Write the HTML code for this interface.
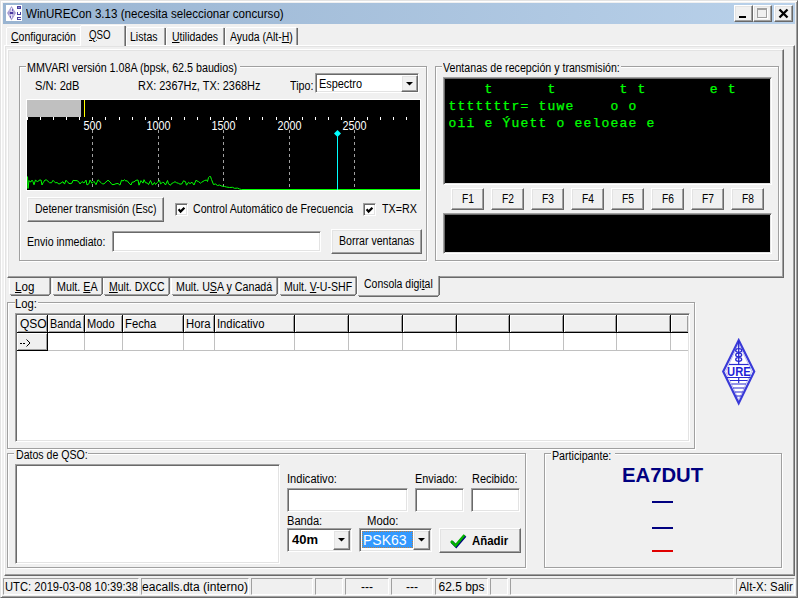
<!DOCTYPE html><html><head><meta charset="utf-8"><style>
*{box-sizing:border-box;margin:0;padding:0}
html,body{width:798px;height:598px;overflow:hidden;background:#f0f0f0}
body{position:relative;font-family:"Liberation Sans",sans-serif;font-size:12px;color:#000}
div,span,svg{position:absolute}
.t{white-space:nowrap;line-height:14px;font-size:12px;transform:scaleX(0.87);transform-origin:0 0}
.u{text-decoration:underline;position:static}
.raised{border:1px solid;border-color:#fff #696969 #696969 #fff;box-shadow:inset -1px -1px #a0a0a0,inset 1px 1px #e3e3e3;background:#f0f0f0}
.sunken{border:1px solid;border-color:#a0a0a0 #fff #fff #a0a0a0;box-shadow:inset 1px 1px #696969,inset -1px -1px #e3e3e3;background:#fff}
.gb{border:1px solid #a0a0a0;box-shadow:inset 1px 1px #fff,1px 1px #fff}
.bg{background:#f0f0f0}
.hl{position:absolute;height:1px}
.vl{position:absolute;width:1px}
</style></head><body>
<div style="left:0;top:0;width:798px;height:598px;border:1px solid;border-color:#e3e3e3 #696969 #696969 #e3e3e3;box-shadow:inset 1px 1px #fff,inset -1px -1px #a0a0a0"></div>
<div style="left:3px;top:3px;width:792px;height:21px;background:linear-gradient(to right,#99b4d1,#b9d1ea)"></div>
<div style="left:6px;top:5px;width:16px;height:16px;background:#fff">
<svg width="16" height="16" style="left:0;top:0">
<polygon points="5.5,1 10,8 5.5,15.5 1,8" fill="#a89ed2"/>
<path d="M5.5 3 V13" stroke="#ece8f8" stroke-width="1"/>
<path d="M3.5 6 H7.5 M3 10 H8" stroke="#d8d0f0" stroke-width="1"/>
<rect x="4" y="7" width="3" height="2" fill="#4a3aa0"/>
<rect x="6" y="4" width="1" height="2" fill="#6a5ab8"/>
<rect x="4" y="11" width="1" height="2" fill="#6a5ab8"/>
<rect x="11" y="1" width="4" height="3" fill="#4a40a0"/><rect x="12" y="2" width="2" height="1" fill="#9890d0"/>
<rect x="11" y="7" width="1" height="3" fill="#4a40a0"/><rect x="14" y="7" width="1" height="3" fill="#4a40a0"/><rect x="11" y="9" width="4" height="1" fill="#4a40a0"/>
<rect x="11" y="12" width="4" height="1" fill="#4a40a0"/><rect x="11" y="12" width="1" height="3" fill="#4a40a0"/><rect x="11" y="14" width="4" height="1" fill="#4a40a0"/>
</svg></div>
<span style="left:26px;top:6px;font-size:12px;line-height:16px;white-space:nowrap;transform:scaleX(0.966);transform-origin:0 0;color:#000">WinURECon 3.13 (necesita seleccionar concurso)</span>
<div class="raised" style="left:734px;top:5px;width:19px;height:17px"><div style="left:4px;top:10px;width:7px;height:2px;background:#000"></div></div>
<div class="raised" style="left:753px;top:5px;width:19px;height:17px"><div style="left:3px;top:2px;width:10px;height:10px;border:1px solid #a0a0a0;border-top-width:2px;box-shadow:1px 1px #fff"></div></div>
<div class="raised" style="left:774px;top:5px;width:19px;height:17px"><svg width="17" height="15" style="left:0;top:0"><path d="M4.5 3.5 L12.5 11.5 M12.5 3.5 L4.5 11.5" stroke="#000" stroke-width="2.3"/></svg></div>
<div class="raised" style="left:4px;top:45px;width:791px;height:531px"></div>
<div style="left:6px;top:27px;width:76px;height:18px;"><div class="hl" style="left:1px;top:0;width:73px;background:#fff"></div><div class="vl" style="left:0;top:1px;height:17px;background:#fff"></div><div class="vl" style="left:75px;top:1px;height:17px;background:#696969"></div><div class="vl" style="left:74px;top:1px;height:17px;background:#a0a0a0"></div></div>
<div style="left:126px;top:27px;width:40px;height:18px;"><div class="hl" style="left:1px;top:0;width:37px;background:#fff"></div><div class="vl" style="left:0;top:1px;height:17px;background:#fff"></div><div class="vl" style="left:39px;top:1px;height:17px;background:#696969"></div><div class="vl" style="left:38px;top:1px;height:17px;background:#a0a0a0"></div></div>
<div style="left:166px;top:27px;width:59px;height:18px;"><div class="hl" style="left:1px;top:0;width:56px;background:#fff"></div><div class="vl" style="left:0;top:1px;height:17px;background:#fff"></div><div class="vl" style="left:58px;top:1px;height:17px;background:#696969"></div><div class="vl" style="left:57px;top:1px;height:17px;background:#a0a0a0"></div></div>
<div style="left:225px;top:27px;width:73px;height:18px;"><div class="hl" style="left:1px;top:0;width:70px;background:#fff"></div><div class="vl" style="left:0;top:1px;height:17px;background:#fff"></div><div class="vl" style="left:72px;top:1px;height:17px;background:#696969"></div><div class="vl" style="left:71px;top:1px;height:17px;background:#a0a0a0"></div></div>
<div style="left:80px;top:25px;width:46px;height:21px;background:#f0f0f0;"><div class="hl" style="left:1px;top:0;width:43px;background:#fff"></div><div class="vl" style="left:0;top:1px;height:20px;background:#fff"></div><div class="vl" style="left:45px;top:1px;height:20px;background:#696969"></div><div class="vl" style="left:44px;top:1px;height:20px;background:#a0a0a0"></div></div>
<span class="t " style="left:11.12px;top:30px;transform:scaleX(0.8767);"><span class=u>C</span>onfiguración</span>
<span class="t " style="left:89.00px;top:28px;transform:scaleX(0.8077);"><span class=u>Q</span>SO</span>
<span class="t " style="left:130.12px;top:30px;transform:scaleX(0.8800);">Listas</span>
<span class="t " style="left:172.13px;top:30px;transform:scaleX(0.8745);"><span class=u>U</span>tilidades</span>
<span class="t " style="left:230.00px;top:30px;transform:scaleX(0.8746);">Ayuda (Alt-<span class=u>H</span>)</span>
<div class="raised" style="left:7px;top:49px;width:777px;height:229px"></div>
<div class="gb" style="left:19px;top:66px;width:408px;height:195px"></div>
<div style="left:26px;top:65px;width:214px;height:4px;background:#f0f0f0"></div>
<span class="t " style="left:27.11px;top:61px;transform:scaleX(0.8932);">MMVARI versión 1.08A (bpsk, 62.5 baudios)</span>
<span class="t " style="left:34.68px;top:79px;transform:scaleX(0.9234);">S/N: 2dB</span>
<span class="t " style="left:138.09px;top:79px;transform:scaleX(0.9098);">RX: 2367Hz, TX: 2368Hz</span>
<span class="t " style="left:289.70px;top:79px;transform:scaleX(0.8920);">Tipo:</span>
<div class="sunken" style="left:315px;top:73px;width:104px;height:20px"></div>
<span class="t " style="left:318.59px;top:77px;transform:scaleX(0.9087);">Espectro</span>
<div class="raised" style="left:401px;top:75px;width:17px;height:17px"><svg width="15" height="15" style="left:0;top:0"><polygon points="4,6 11,6 7.5,9.5" fill="#000"/></svg></div>
<div style="left:27px;top:100px;width:393px;height:90px;outline:1px solid #fff"><svg width="393" height="90" style="left:0;top:0"><rect x="0" y="0" width="393" height="90" fill="#000"/><rect x="0" y="0" width="54" height="17" fill="#c0c0c0"/><rect x="57" y="0" width="1" height="17" fill="#ffff00"/><rect x="0" y="17" width="1" height="3" fill="#fff"/><rect x="13" y="17" width="1" height="3" fill="#fff"/><rect x="26" y="17" width="1" height="3" fill="#fff"/><rect x="39" y="17" width="1" height="3" fill="#fff"/><rect x="52" y="17" width="1" height="3" fill="#fff"/><rect x="65" y="17" width="1" height="3" fill="#fff"/><rect x="78" y="17" width="1" height="3" fill="#fff"/><rect x="92" y="17" width="1" height="3" fill="#fff"/><rect x="105" y="17" width="1" height="3" fill="#fff"/><rect x="118" y="17" width="1" height="3" fill="#fff"/><rect x="131" y="17" width="1" height="3" fill="#fff"/><rect x="144" y="17" width="1" height="3" fill="#fff"/><rect x="157" y="17" width="1" height="3" fill="#fff"/><rect x="170" y="17" width="1" height="3" fill="#fff"/><rect x="183" y="17" width="1" height="3" fill="#fff"/><rect x="196" y="17" width="1" height="3" fill="#fff"/><rect x="209" y="17" width="1" height="3" fill="#fff"/><rect x="222" y="17" width="1" height="3" fill="#fff"/><rect x="235" y="17" width="1" height="3" fill="#fff"/><rect x="249" y="17" width="1" height="3" fill="#fff"/><rect x="262" y="17" width="1" height="3" fill="#fff"/><rect x="275" y="17" width="1" height="3" fill="#fff"/><rect x="288" y="17" width="1" height="3" fill="#fff"/><rect x="301" y="17" width="1" height="3" fill="#fff"/><rect x="314" y="17" width="1" height="3" fill="#fff"/><rect x="327" y="17" width="1" height="3" fill="#fff"/><rect x="340" y="17" width="1" height="3" fill="#fff"/><rect x="353" y="17" width="1" height="3" fill="#fff"/><rect x="366" y="17" width="1" height="3" fill="#fff"/><rect x="379" y="17" width="1" height="3" fill="#fff"/><line x1="65.5" y1="30" x2="65.5" y2="90" stroke="#a0a0a0" stroke-width="1" stroke-dasharray="3,3"/><text x="65.5" y="30" fill="#fff" font-family="Liberation Sans" font-size="12" text-anchor="middle" transform="translate(65.5,0) scale(0.9,1) translate(-65.5,0)">500</text><line x1="131.5" y1="30" x2="131.5" y2="90" stroke="#a0a0a0" stroke-width="1" stroke-dasharray="3,3"/><text x="131.5" y="30" fill="#fff" font-family="Liberation Sans" font-size="12" text-anchor="middle" transform="translate(131.5,0) scale(0.9,1) translate(-131.5,0)">1000</text><line x1="196.5" y1="30" x2="196.5" y2="90" stroke="#a0a0a0" stroke-width="1" stroke-dasharray="3,3"/><text x="196.5" y="30" fill="#fff" font-family="Liberation Sans" font-size="12" text-anchor="middle" transform="translate(196.5,0) scale(0.9,1) translate(-196.5,0)">1500</text><line x1="262.5" y1="30" x2="262.5" y2="90" stroke="#a0a0a0" stroke-width="1" stroke-dasharray="3,3"/><text x="262.5" y="30" fill="#fff" font-family="Liberation Sans" font-size="12" text-anchor="middle" transform="translate(262.5,0) scale(0.9,1) translate(-262.5,0)">2000</text><line x1="327.5" y1="30" x2="327.5" y2="90" stroke="#a0a0a0" stroke-width="1" stroke-dasharray="3,3"/><text x="327.5" y="30" fill="#fff" font-family="Liberation Sans" font-size="12" text-anchor="middle" transform="translate(327.5,0) scale(0.9,1) translate(-327.5,0)">2500</text><path d="M0.5 76.5 L1.0 88.5 L2.0 80.5 L2.5 81.5 L4.0 81.9 L5.0 80.1 L6.0 81.7 L7.0 84.8 L8.5 79.9 L10.5 82.0 L12.0 80.2 L14.0 80.0 L15.0 85.0 L16.0 82.9 L18.0 80.0 L19.5 80.0 L21.0 81.3 L22.5 82.7 L24.5 82.8 L26.0 80.3 L27.5 81.8 L28.5 82.9 L30.0 82.5 L32.0 84.1 L34.0 83.0 L36.0 81.7 L37.5 84.1 L39.0 80.2 L41.0 82.6 L43.0 83.8 L45.0 83.1 L46.0 80.4 L48.0 80.6 L50.0 80.6 L52.0 82.1 L53.0 84.0 L55.0 81.6 L57.0 83.0 L59.0 80.1 L60.0 85.0 L62.0 83.6 L63.0 80.0 L65.0 83.3 L67.0 81.3 L69.0 84.7 L71.0 79.8 L73.0 81.7 L74.0 82.5 L75.5 84.0 L77.0 83.8 L79.0 81.9 L81.0 80.2 L83.0 81.9 L85.0 84.6 L87.0 84.5 L89.0 83.7 L91.0 83.5 L93.0 85.1 L94.5 80.2 L96.0 81.0 L97.5 79.8 L99.0 81.2 L100.0 80.5 L102.0 83.1 L104.0 85.0 L105.0 82.3 L107.0 81.9 L109.0 80.3 L111.0 80.0 L112.0 85.2 L114.0 80.6 L116.0 83.1 L117.0 79.7 L118.5 82.7 L120.5 83.1 L121.5 84.6 L123.5 80.5 L125.5 85.1 L127.5 82.4 L128.5 84.5 L130.5 82.4 L132.5 80.2 L133.5 83.9 L135.5 82.4 L137.0 82.6 L138.5 85.0 L140.5 80.5 L141.5 83.9 L143.5 85.2 L144.5 83.6 L146.5 82.6 L148.0 81.7 L149.5 82.7 L151.5 83.3 L153.0 84.2 L155.0 83.8 L156.5 80.8 L158.5 81.7 L159.5 85.2 L161.5 82.3 L163.0 83.6 L165.0 82.2 L167.0 85.0 L169.0 80.2 L170.0 81.0 L171.5 81.6 L173.5 83.2 L174.5 82.4 L177.5 80.5 L179.5 80.0 L180.5 81.5 L181.5 77.5 L182.5 76.5 L183.5 76.5 L184.5 79.5 L186.5 84.5 L188.5 84.0 L190.5 85.5 L192.5 85.0 L194.5 86.0 L197.5 86.5 L199.5 87.0 L202.5 87.5 L205.5 87.3 L207.5 88.3 L210.5 88.1 L212.5 89.0 L214.5 89.5 L393.5 89.5" fill="none" stroke="#00ff00" stroke-width="1"/><line x1="310.5" y1="33" x2="310.5" y2="90" stroke="#00ffff" stroke-width="1"/><polygon points="310.5,30 314.0,33.5 310.5,37 307.0,33.5" fill="#00ffff"/></svg></div>
<div class="raised" style="left:27px;top:197px;width:137px;height:25px"></div>
<span class="t " style="left:34.82px;top:202px;transform:scaleX(0.8766);">Detener transmisión (Esc)</span>
<div class="sunken" style="left:175px;top:203px;width:13px;height:13px"><svg width="11" height="11" style="left:0;top:0"><path d="M2.6 5.3 L4.6 7.6 L8.4 3.7" stroke="#000" stroke-width="2.2" fill="none" stroke-linecap="butt"/></svg></div>
<span class="t " style="left:192.61px;top:202px;transform:scaleX(0.8861);">Control Automático de Frecuencia</span>
<div class="sunken" style="left:363px;top:203px;width:13px;height:13px"><svg width="11" height="11" style="left:0;top:0"><path d="M2.6 5.3 L4.6 7.6 L8.4 3.7" stroke="#000" stroke-width="2.2" fill="none" stroke-linecap="butt"/></svg></div>
<span class="t " style="left:381.70px;top:202px;transform:scaleX(0.8949);">TX=RX</span>
<span class="t " style="left:26.72px;top:235px;transform:scaleX(0.8839);">Envio inmediato:</span>
<div class="sunken" style="left:112px;top:231px;width:209px;height:21px"></div>
<div class="raised" style="left:331px;top:229px;width:91px;height:25px"></div>
<span class="t " style="left:338.52px;top:234px;transform:scaleX(0.8833);">Borrar ventanas</span>
<div class="gb" style="left:435px;top:66px;width:344px;height:195px"></div>
<div style="left:442px;top:65px;width:179px;height:4px;background:#f0f0f0"></div>
<span class="t " style="left:443.00px;top:61px;transform:scaleX(0.8864);">Ventanas de recepción y transmisión:</span>
<div class="sunken" style="left:443px;top:77px;width:329px;height:108px;background:#000"></div>
<span style="left:448.6px;top:81px;font-family:Liberation Mono,monospace;font-weight:normal;font-size:13px;letter-spacing:1.2px;-webkit-text-stroke:0.25px #00ff00;line-height:17px;color:#00ff00;white-space:pre">    t      t       t t       e t</span>
<span style="left:448.6px;top:98px;font-family:Liberation Mono,monospace;font-weight:normal;font-size:13px;letter-spacing:1.2px;-webkit-text-stroke:0.25px #00ff00;line-height:17px;color:#00ff00;white-space:pre">tttttttr= tuwe    o o</span>
<span style="left:448.6px;top:115px;font-family:Liberation Mono,monospace;font-weight:normal;font-size:13px;letter-spacing:1.2px;-webkit-text-stroke:0.25px #00ff00;line-height:17px;color:#00ff00;white-space:pre">oii e Ýuett o eeloeae e</span>
<div class="raised" style="left:451px;top:188px;width:33px;height:22px"></div>
<span class="t " style="left:461.65px;top:192px;transform:scaleX(0.8538);">F1</span>
<div class="raised" style="left:491px;top:188px;width:33px;height:22px"></div>
<span class="t " style="left:501.65px;top:192px;transform:scaleX(0.8538);">F2</span>
<div class="raised" style="left:531px;top:188px;width:33px;height:22px"></div>
<span class="t " style="left:541.65px;top:192px;transform:scaleX(0.8538);">F3</span>
<div class="raised" style="left:571px;top:188px;width:33px;height:22px"></div>
<span class="t " style="left:581.65px;top:192px;transform:scaleX(0.8538);">F4</span>
<div class="raised" style="left:611px;top:188px;width:33px;height:22px"></div>
<span class="t " style="left:621.65px;top:192px;transform:scaleX(0.8538);">F5</span>
<div class="raised" style="left:651px;top:188px;width:33px;height:22px"></div>
<span class="t " style="left:661.65px;top:192px;transform:scaleX(0.8538);">F6</span>
<div class="raised" style="left:691px;top:188px;width:33px;height:22px"></div>
<span class="t " style="left:701.65px;top:192px;transform:scaleX(0.8538);">F7</span>
<div class="raised" style="left:731px;top:188px;width:33px;height:22px"></div>
<span class="t " style="left:741.65px;top:192px;transform:scaleX(0.8538);">F8</span>
<div class="sunken" style="left:443px;top:213px;width:329px;height:41px;background:#000"></div>
<div style="left:9px;top:278px;width:42px;height:18px;"><div class="vl" style="left:0;top:0;height:16px;background:#fff"></div><div class="vl" style="left:41px;top:0;height:16px;background:#696969"></div><div class="vl" style="left:40px;top:0;height:16px;background:#a0a0a0"></div><div class="hl" style="left:2px;top:17px;width:38px;background:#696969"></div><div class="hl" style="left:1px;top:16px;width:40px;background:#a0a0a0"></div><div class="hl" style="left:40px;top:16px;width:1px;background:#696969"></div></div>
<div style="left:52px;top:278px;width:51px;height:18px;"><div class="vl" style="left:0;top:0;height:16px;background:#fff"></div><div class="vl" style="left:50px;top:0;height:16px;background:#696969"></div><div class="vl" style="left:49px;top:0;height:16px;background:#a0a0a0"></div><div class="hl" style="left:2px;top:17px;width:47px;background:#696969"></div><div class="hl" style="left:1px;top:16px;width:49px;background:#a0a0a0"></div><div class="hl" style="left:49px;top:16px;width:1px;background:#696969"></div></div>
<div style="left:103px;top:278px;width:67px;height:18px;"><div class="vl" style="left:0;top:0;height:16px;background:#fff"></div><div class="vl" style="left:66px;top:0;height:16px;background:#696969"></div><div class="vl" style="left:65px;top:0;height:16px;background:#a0a0a0"></div><div class="hl" style="left:2px;top:17px;width:63px;background:#696969"></div><div class="hl" style="left:1px;top:16px;width:65px;background:#a0a0a0"></div><div class="hl" style="left:65px;top:16px;width:1px;background:#696969"></div></div>
<div style="left:171px;top:278px;width:107px;height:18px;"><div class="vl" style="left:0;top:0;height:16px;background:#fff"></div><div class="vl" style="left:106px;top:0;height:16px;background:#696969"></div><div class="vl" style="left:105px;top:0;height:16px;background:#a0a0a0"></div><div class="hl" style="left:2px;top:17px;width:103px;background:#696969"></div><div class="hl" style="left:1px;top:16px;width:105px;background:#a0a0a0"></div><div class="hl" style="left:105px;top:16px;width:1px;background:#696969"></div></div>
<div style="left:279px;top:278px;width:78px;height:18px;"><div class="vl" style="left:0;top:0;height:16px;background:#fff"></div><div class="vl" style="left:77px;top:0;height:16px;background:#696969"></div><div class="vl" style="left:76px;top:0;height:16px;background:#a0a0a0"></div><div class="hl" style="left:2px;top:17px;width:74px;background:#696969"></div><div class="hl" style="left:1px;top:16px;width:76px;background:#a0a0a0"></div><div class="hl" style="left:76px;top:16px;width:1px;background:#696969"></div></div>
<div style="left:357px;top:276px;width:83px;height:21px;background:#f0f0f0;"><div class="vl" style="left:0;top:0;height:19px;background:#fff"></div><div class="vl" style="left:82px;top:0;height:19px;background:#696969"></div><div class="vl" style="left:81px;top:0;height:19px;background:#a0a0a0"></div><div class="hl" style="left:2px;top:20px;width:79px;background:#696969"></div><div class="hl" style="left:1px;top:19px;width:81px;background:#a0a0a0"></div><div class="hl" style="left:81px;top:19px;width:1px;background:#696969"></div></div>
<span class="t " style="left:15.03px;top:280px;transform:scaleX(0.9667);"><span class=u>L</span>og</span>
<span class="t " style="left:56.70px;top:280px;transform:scaleX(0.8955);">Mult. <span class=u>E</span>A</span>
<span class="t " style="left:109.12px;top:280px;transform:scaleX(0.8758);"><span class=u>M</span>ult. DXCC</span>
<span class="t " style="left:176.11px;top:280px;transform:scaleX(0.8907);">Mult. U<span class=u>S</span>A y Canadá</span>
<span class="t " style="left:283.92px;top:280px;transform:scaleX(0.8803);">Mult. <span class=u>V</span>-U-SHF</span>
<span class="t " style="left:363.93px;top:277px;transform:scaleX(0.8727);">Consola digi<span class=u>t</span>al</span>
<div class="gb" style="left:7px;top:302px;width:688px;height:147px"></div>
<div style="left:15px;top:301px;width:23px;height:4px;background:#f0f0f0"></div>
<span class="t " style="left:15.06px;top:297px;transform:scaleX(0.9381);">Log:</span>
<div class="sunken" style="left:15px;top:313px;width:675px;height:129px;background:#fff"></div>
<div style="left:17px;top:315px;width:30px;height:17px;background:#f0f0f0;border-top:1px solid #fff;border-left:1px solid #fff;box-shadow:inset -1px -1px #a0a0a0"></div>
<div style="left:47px;top:315px;width:1px;height:18px;background:#000"></div>
<span class="t " style="left:20.00px;top:317px;transform:scaleX(1.0000);">QSO</span>
<div style="left:48px;top:315px;width:36px;height:17px;background:#f0f0f0;border-top:1px solid #fff;border-left:1px solid #fff;box-shadow:inset -1px -1px #a0a0a0"></div>
<div style="left:84px;top:315px;width:1px;height:18px;background:#000"></div>
<span class="t " style="left:50.10px;top:317px;transform:scaleX(0.9000);">Banda</span>
<div style="left:48px;top:350px;width:37px;height:1px;background:#c0c0c0"></div>
<div style="left:84px;top:333px;width:1px;height:17px;background:#c0c0c0"></div>
<div style="left:85px;top:315px;width:37px;height:17px;background:#f0f0f0;border-top:1px solid #fff;border-left:1px solid #fff;box-shadow:inset -1px -1px #a0a0a0"></div>
<div style="left:122px;top:315px;width:1px;height:18px;background:#000"></div>
<span class="t " style="left:87.08px;top:317px;transform:scaleX(0.9207);">Modo</span>
<div style="left:85px;top:350px;width:38px;height:1px;background:#c0c0c0"></div>
<div style="left:122px;top:333px;width:1px;height:17px;background:#c0c0c0"></div>
<div style="left:123px;top:315px;width:60px;height:17px;background:#f0f0f0;border-top:1px solid #fff;border-left:1px solid #fff;box-shadow:inset -1px -1px #a0a0a0"></div>
<div style="left:183px;top:315px;width:1px;height:18px;background:#000"></div>
<span class="t " style="left:125.06px;top:317px;transform:scaleX(0.9406);">Fecha</span>
<div style="left:123px;top:350px;width:61px;height:1px;background:#c0c0c0"></div>
<div style="left:183px;top:333px;width:1px;height:17px;background:#c0c0c0"></div>
<div style="left:184px;top:315px;width:30px;height:17px;background:#f0f0f0;border-top:1px solid #fff;border-left:1px solid #fff;box-shadow:inset -1px -1px #a0a0a0"></div>
<div style="left:214px;top:315px;width:1px;height:18px;background:#000"></div>
<span class="t " style="left:186.06px;top:317px;transform:scaleX(0.9400);">Hora</span>
<div style="left:184px;top:350px;width:31px;height:1px;background:#c0c0c0"></div>
<div style="left:214px;top:333px;width:1px;height:17px;background:#c0c0c0"></div>
<div style="left:215px;top:315px;width:79px;height:17px;background:#f0f0f0;border-top:1px solid #fff;border-left:1px solid #fff;box-shadow:inset -1px -1px #a0a0a0"></div>
<div style="left:294px;top:315px;width:1px;height:18px;background:#000"></div>
<span class="t " style="left:217.06px;top:317px;transform:scaleX(0.9367);">Indicativo</span>
<div style="left:215px;top:350px;width:80px;height:1px;background:#c0c0c0"></div>
<div style="left:294px;top:333px;width:1px;height:17px;background:#c0c0c0"></div>
<div style="left:295px;top:315px;width:53px;height:17px;background:#f0f0f0;border-top:1px solid #fff;border-left:1px solid #fff;box-shadow:inset -1px -1px #a0a0a0"></div>
<div style="left:348px;top:315px;width:1px;height:18px;background:#000"></div>
<div style="left:295px;top:350px;width:54px;height:1px;background:#c0c0c0"></div>
<div style="left:348px;top:333px;width:1px;height:17px;background:#c0c0c0"></div>
<div style="left:349px;top:315px;width:53px;height:17px;background:#f0f0f0;border-top:1px solid #fff;border-left:1px solid #fff;box-shadow:inset -1px -1px #a0a0a0"></div>
<div style="left:402px;top:315px;width:1px;height:18px;background:#000"></div>
<div style="left:349px;top:350px;width:54px;height:1px;background:#c0c0c0"></div>
<div style="left:402px;top:333px;width:1px;height:17px;background:#c0c0c0"></div>
<div style="left:403px;top:315px;width:53px;height:17px;background:#f0f0f0;border-top:1px solid #fff;border-left:1px solid #fff;box-shadow:inset -1px -1px #a0a0a0"></div>
<div style="left:456px;top:315px;width:1px;height:18px;background:#000"></div>
<div style="left:403px;top:350px;width:54px;height:1px;background:#c0c0c0"></div>
<div style="left:456px;top:333px;width:1px;height:17px;background:#c0c0c0"></div>
<div style="left:457px;top:315px;width:52px;height:17px;background:#f0f0f0;border-top:1px solid #fff;border-left:1px solid #fff;box-shadow:inset -1px -1px #a0a0a0"></div>
<div style="left:509px;top:315px;width:1px;height:18px;background:#000"></div>
<div style="left:457px;top:350px;width:53px;height:1px;background:#c0c0c0"></div>
<div style="left:509px;top:333px;width:1px;height:17px;background:#c0c0c0"></div>
<div style="left:510px;top:315px;width:53px;height:17px;background:#f0f0f0;border-top:1px solid #fff;border-left:1px solid #fff;box-shadow:inset -1px -1px #a0a0a0"></div>
<div style="left:563px;top:315px;width:1px;height:18px;background:#000"></div>
<div style="left:510px;top:350px;width:54px;height:1px;background:#c0c0c0"></div>
<div style="left:563px;top:333px;width:1px;height:17px;background:#c0c0c0"></div>
<div style="left:564px;top:315px;width:52px;height:17px;background:#f0f0f0;border-top:1px solid #fff;border-left:1px solid #fff;box-shadow:inset -1px -1px #a0a0a0"></div>
<div style="left:616px;top:315px;width:1px;height:18px;background:#000"></div>
<div style="left:564px;top:350px;width:53px;height:1px;background:#c0c0c0"></div>
<div style="left:616px;top:333px;width:1px;height:17px;background:#c0c0c0"></div>
<div style="left:617px;top:315px;width:53px;height:17px;background:#f0f0f0;border-top:1px solid #fff;border-left:1px solid #fff;box-shadow:inset -1px -1px #a0a0a0"></div>
<div style="left:670px;top:315px;width:1px;height:18px;background:#000"></div>
<div style="left:617px;top:350px;width:54px;height:1px;background:#c0c0c0"></div>
<div style="left:670px;top:333px;width:1px;height:17px;background:#c0c0c0"></div>
<div style="left:671px;top:315px;width:17px;height:17px;background:#f0f0f0;border-top:1px solid #fff;border-left:1px solid #fff;box-shadow:inset -1px -1px #a0a0a0"></div>
<div style="left:671px;top:350px;width:17px;height:1px;background:#c0c0c0"></div>
<div style="left:17px;top:332px;width:671px;height:1px;background:#000"></div>
<div style="left:17px;top:333px;width:30px;height:17px;background:#f0f0f0;border-top:1px solid #fff;border-left:1px solid #fff;box-shadow:inset -1px -1px #a0a0a0"></div>
<div style="left:47px;top:333px;width:1px;height:18px;background:#000"></div>
<div style="left:17px;top:350px;width:31px;height:1px;background:#000"></div>
<svg width="12" height="8" style="left:20px;top:339px"><path d="M0 4.5 H2 M3 4.5 H5 M6.5 0.5 L10 4 L6.5 7.5" stroke="#000" stroke-width="1" fill="none"/></svg>
<svg width="42" height="75" style="left:718px;top:334px">
<polygon points="20.7,6.2 36.2,37.4 20.7,69.2 5.2,37.4" fill="#fff" stroke="#3a3ad8" stroke-width="2.2" stroke-linejoin="miter"/>
<polygon points="20.7,9.5 33.8,37.4 20.7,65.8 7.6,37.4" fill="none" stroke="#9f9fe8" stroke-width="0.7"/>
<path d="M20.7 7 V30" stroke="#2a2ad0" stroke-width="1.3"/>
<ellipse cx="20.7" cy="16.5" rx="3" ry="1.8" fill="none" stroke="#2a2ad0" stroke-width="1.3"/>
<ellipse cx="20.7" cy="21" rx="3" ry="1.8" fill="none" stroke="#2a2ad0" stroke-width="1.3"/>
<ellipse cx="20.7" cy="25.5" rx="3" ry="1.8" fill="none" stroke="#2a2ad0" stroke-width="1.3"/>
<path d="M11 30.5 H30.5" stroke="#2a2ad0" stroke-width="1.2"/>
<text x="20.9" y="42" text-anchor="middle" font-family="Liberation Sans" font-weight="bold" font-size="12.5" fill="#1f1fd8" transform="translate(20.9,0) scale(0.9,1) translate(-20.9,0)">URE</text>
<path d="M9 43.5 H32.5 M12 46.5 H29.5 M13.5 50 H28 M15 54 H26.5 M16.5 58 H25 M18 62 H23.5 M20.7 43.5 V49" stroke="#2a2ad0" stroke-width="1.2"/>
</svg>
<div class="gb" style="left:7px;top:453px;width:519px;height:115px"></div>
<div style="left:14px;top:452px;width:74px;height:4px;background:#f0f0f0"></div>
<span class="t " style="left:15.92px;top:448px;transform:scaleX(0.8823);">Datos de QSO:</span>
<div class="sunken" style="left:15px;top:464px;width:265px;height:100px"></div>
<span class="t " style="left:287.08px;top:472px;transform:scaleX(0.9231);">Indicativo:</span>
<div class="sunken" style="left:287px;top:488px;width:121px;height:24px"></div>
<span class="t " style="left:415.29px;top:472px;transform:scaleX(0.9067);">Enviado:</span>
<div class="sunken" style="left:415px;top:488px;width:49px;height:24px"></div>
<span class="t " style="left:471.59px;top:472px;transform:scaleX(0.9104);">Recibido:</span>
<div class="sunken" style="left:471px;top:488px;width:49px;height:24px"></div>
<span class="t " style="left:287.07px;top:514px;transform:scaleX(0.9250);">Banda:</span>
<span class="t " style="left:367.06px;top:514px;transform:scaleX(0.9419);">Modo:</span>
<div class="sunken" style="left:287px;top:528px;width:65px;height:24px"></div>
<span style="left:292px;top:532px;font-weight:bold;font-size:13px;line-height:15px">40m</span>
<div class="raised" style="left:333px;top:530px;width:17px;height:20px"><svg width="15" height="18" style="left:0;top:0"><polygon points="4,7 11,7 7.5,10.5" fill="#000"/></svg></div>
<div class="sunken" style="left:359px;top:528px;width:73px;height:24px"></div>
<div style="left:362px;top:531px;width:51px;height:17px;background:#3399ff;outline:1px dotted #c08040;outline-offset:-1px"></div>
<span style="left:363px;top:532px;font-size:14px;line-height:16px;color:#fff">PSK63</span>
<div class="raised" style="left:413px;top:530px;width:17px;height:20px"><svg width="15" height="18" style="left:0;top:0"><polygon points="4,7 11,7 7.5,10.5" fill="#000"/></svg></div>
<div class="raised" style="left:439px;top:528px;width:82px;height:25px"></div>
<svg width="20" height="18" style="left:449px;top:531px"><path d="M2 10 L6.5 14.5 L15.5 4" stroke="#000080" stroke-width="3" fill="none" transform="translate(0.7,0.7)"/><path d="M2 10 L6.5 14.5 L15.5 4" stroke="#00b000" stroke-width="2.6" fill="none"/></svg>
<span style="left:472px;top:534px;font-weight:bold;font-size:12px;line-height:14px;transform:scaleX(0.95);transform-origin:0 0">Añadir</span>
<div class="gb" style="left:544px;top:453px;width:238px;height:115px"></div>
<div style="left:551px;top:452px;width:64px;height:4px;background:#f0f0f0"></div>
<span class="t " style="left:551.91px;top:449px;transform:scaleX(0.8892);">Participante:</span>
<span style="left:622px;top:465px;font-weight:bold;font-size:20.3px;line-height:20px;color:#000080;white-space:nowrap">EA7DUT</span>
<div style="left:652px;top:501px;width:21px;height:2px;background:#000080"></div>
<div style="left:652px;top:527px;width:21px;height:2px;background:#000080"></div>
<div style="left:652px;top:550px;width:21px;height:2px;background:#e00000"></div>
<div style="left:3px;top:578px;width:136px;height:17px;border:1px solid;border-color:#a0a0a0 #fff #fff #a0a0a0"></div>
<span style="left:5px;top:579px;font-size:12px;line-height:16px;white-space:nowrap;transform:scaleX(0.932);transform-origin:0 0">UTC: 2019-03-08 10:39:38</span>
<div style="left:141px;top:578px;width:108px;height:17px;border:1px solid;border-color:#a0a0a0 #fff #fff #a0a0a0"></div>
<span style="left:142px;top:579px;font-size:12px;line-height:16px;white-space:nowrap;transform:scaleX(1.005);transform-origin:0 0">eacalls.dta (interno)</span>
<div style="left:251px;top:578px;width:62px;height:17px;border:1px solid;border-color:#a0a0a0 #fff #fff #a0a0a0"></div>
<div style="left:315px;top:578px;width:28px;height:17px;border:1px solid;border-color:#a0a0a0 #fff #fff #a0a0a0"></div>
<div style="left:345px;top:578px;width:44px;height:17px;border:1px solid;border-color:#a0a0a0 #fff #fff #a0a0a0"></div>
<span style="left:345px;width:44px;text-align:center;top:579px;font-size:12px;line-height:16px;white-space:nowrap">---</span>
<div style="left:391px;top:578px;width:42px;height:17px;border:1px solid;border-color:#a0a0a0 #fff #fff #a0a0a0"></div>
<span style="left:391px;width:42px;text-align:center;top:579px;font-size:12px;line-height:16px;white-space:nowrap">---</span>
<div style="left:435px;top:578px;width:53px;height:17px;border:1px solid;border-color:#a0a0a0 #fff #fff #a0a0a0"></div>
<span style="left:435px;width:53px;text-align:center;top:579px;font-size:12px;line-height:16px;white-space:nowrap">62.5 bps</span>
<div style="left:490px;top:578px;width:18px;height:17px;border:1px solid;border-color:#a0a0a0 #fff #fff #a0a0a0"></div>
<div style="left:510px;top:578px;width:224px;height:17px;border:1px solid;border-color:#a0a0a0 #fff #fff #a0a0a0"></div>
<div style="left:736px;top:578px;width:59px;height:17px;border:1px solid;border-color:#a0a0a0 #fff #fff #a0a0a0"></div>
<span style="left:739px;top:579px;font-size:12px;line-height:16px;white-space:nowrap;transform:scaleX(0.95);transform-origin:0 0">Alt-X: Salir</span>
</body></html>
